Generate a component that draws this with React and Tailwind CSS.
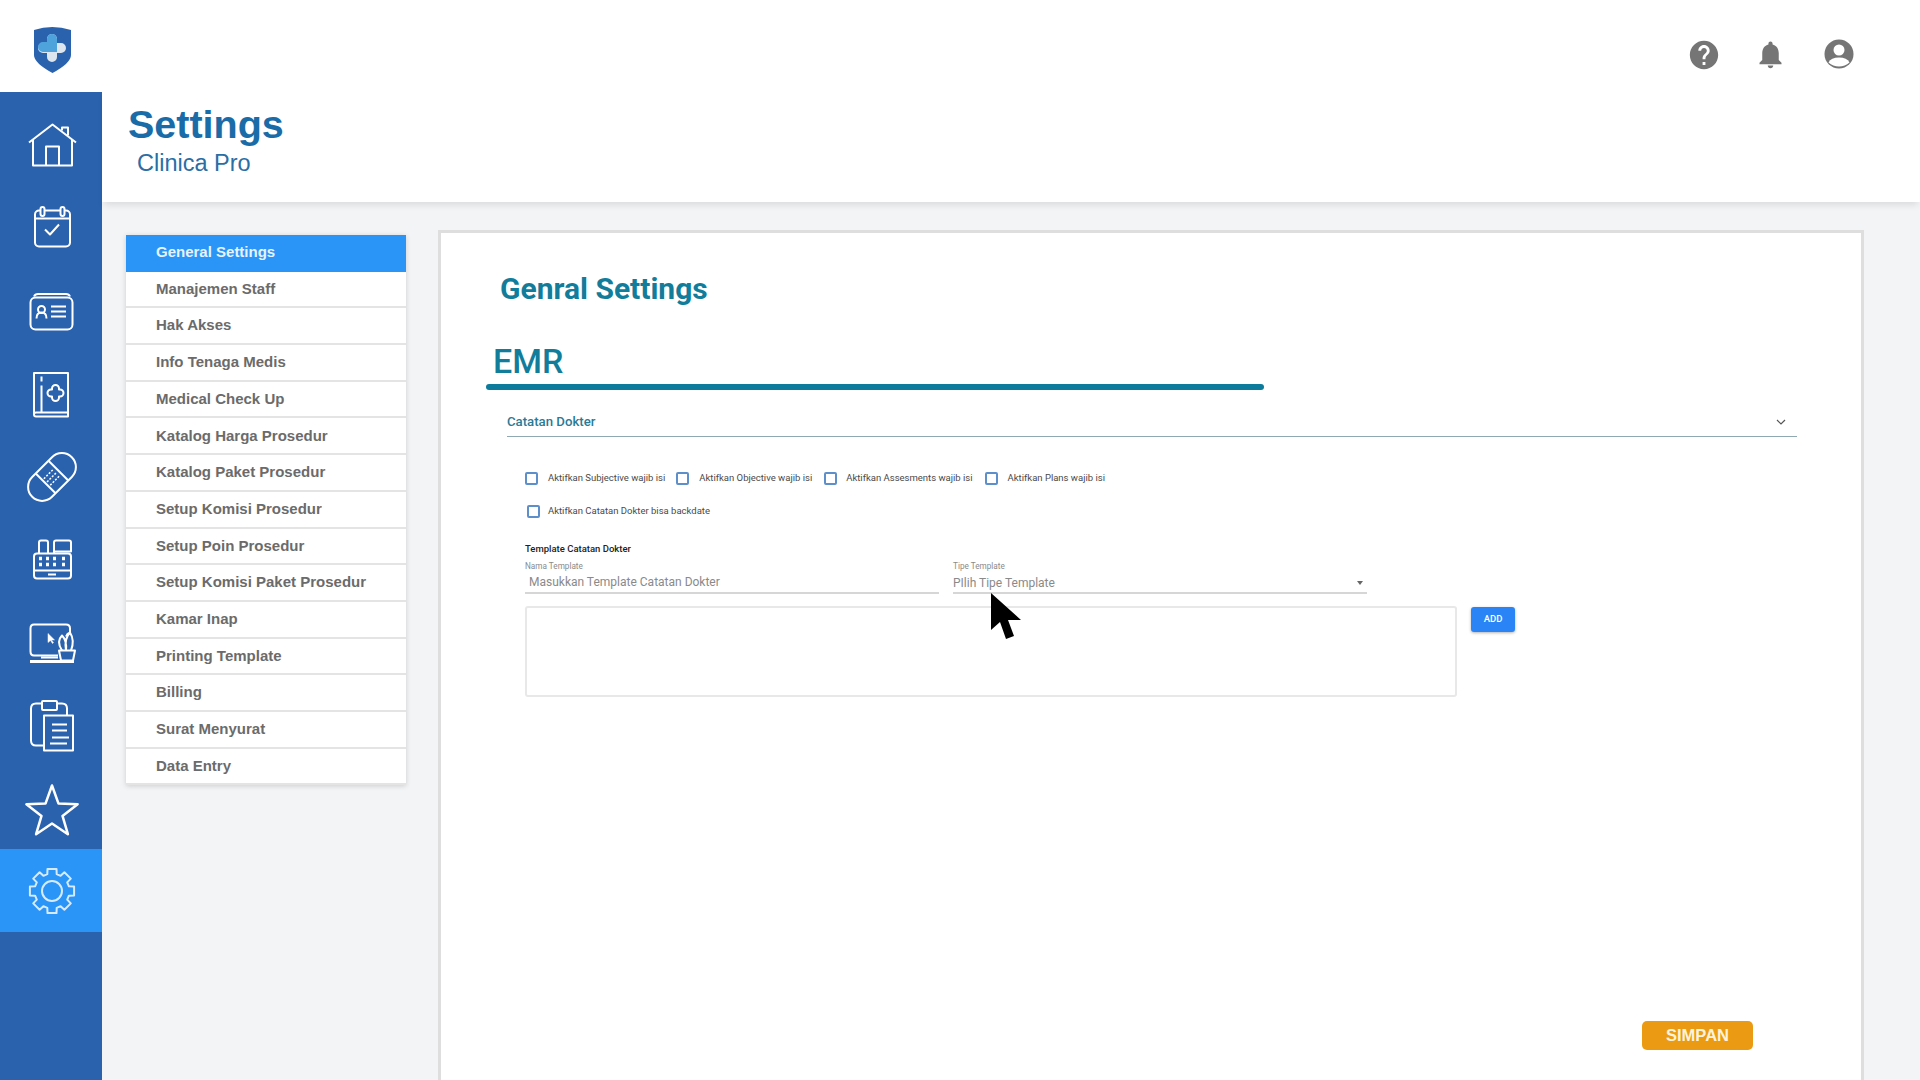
import React from 'react';

const menu = [
  'General Settings', 'Manajemen Staff', 'Hak Akses', 'Info Tenaga Medis', 'Medical Check Up',
  'Katalog Harga Prosedur', 'Katalog Paket Prosedur', 'Setup Komisi Prosedur', 'Setup Poin Prosedur',
  'Setup Komisi Paket Prosedur', 'Kamar Inap', 'Printing Template', 'Billing', 'Surat Menyurat', 'Data Entry',
];

// gear outline, 8 teeth
const gearPath = (cx, cy, outer, inner) => {
  const pts = [];
  for (let i = 0; i < 8; i++) {
    const a = (i * Math.PI) / 4 - Math.PI / 2;
    const w = 0.2;
    const g = 0.27;
    [[inner, a - g], [outer, a - w], [outer, a + w], [inner, a + g]].forEach(([r, t]) => {
      pts.push(`${(cx + r * Math.cos(t)).toFixed(1)} ${(cy + r * Math.sin(t)).toFixed(1)}`);
    });
  }
  return 'M' + pts.join('L') + 'Z';
};

// icons are drawn in page coordinates, the viewBox moves them into their slot
const navIcons = [
  <>
    <path d="M29 142 52.5 124 76 142" />
    <path d="M62 130v-3h6v8" />
    <path d="M33 139v26h39v-26M46 165v-19h13v19" />
  </>,
  <>
    <rect x="35" y="210" width="35" height="36" rx="4" />
    <path d="M35 218h35" />
    <rect x="40.5" y="206.5" width="4" height="9" rx="2" fill="#2a62ae" />
    <rect x="60.5" y="206.5" width="4" height="9" rx="2" fill="#2a62ae" />
    <path d="M45 229l5 5 9-10" />
  </>,
  <>
    <rect x="30.5" y="297" width="42" height="32" rx="5" />
    <path d="M34 296q1-2.500 4-2.500h28q3 0 4 2.500" />
    <circle cx="41.500" cy="309" r="3.500" />
    <path d="M36.500 318q0-6 5-6t5 6" />
    <path d="M51 306h15M51 311h15M51 316h15" />
  </>,
  <>
    <path d="M34 414v-41.500h34V416H36q-2 0-2-2t2-2h32" />
    <path d="M41.500 376v5M41.500 385v27" />
    <path d="M52 389v-1a3.500 3.500 0 0 1 7 0v1h1a3.500 3.500 0 0 1 0 7h-1v1a3.500 3.500 0 0 1-7 0v-1h-1a3.500 3.500 0 0 1 0-7z" />
  </>,
  <g transform="rotate(-45 52 476.5)">
    <rect x="24" y="462.500" width="56" height="28" rx="14" />
    <path d="M43 462.500v28M61 462.500v28" />
    <path d="M45 472h14M45 476.500h14M45 481h14" strokeDasharray="2 1.500" strokeWidth="1.500" />
  </g>,
  <>
    <rect x="34" y="553" width="37" height="25" rx="3" />
    <path d="M39 553v-11q0-2 2-2h5q2 0 2 2v11M54 553v-11q0-2 2-2h13q2 0 2 2v9H54" />
    <path d="M34 570h37M48 574h8" />
    <path d="M39 558h3M46 558h3M53 558h3M62 558h3M39 564h3M46 564h3M53 564h3M62 564h3" strokeWidth="3.500" />
  </>,
  <>
    <path d="M58 655H34q-3.500 0-3.500-4v-23q0-4 3.500-4h32q4 0 4 4v6" />
    <path d="M30 661h44" strokeWidth="3" />
    <path d="M41 657h17" />
    <path d="M48 633v9l2.500-2 2 3 1-.800-2-2.800h3z" fill="#fff" strokeWidth="0.500" />
    <path d="M59 650h16l-2 10H61z" />
    <path d="M62 650q-6-9 0-15 5 5 4 15M66 650q-2-12 4-18 5 8 1 18M70 632q-3 1-4 4" />
  </>,
  <>
    <path d="M44 745H36q-5 0-5-5v-32q0-5 5-5h6M57 703h5q5 0 5 5v7" />
    <rect x="42" y="700.500" width="15" height="9" rx="1" />
    <rect x="44" y="715" width="29" height="35" />
    <path d="M52 724h15M52 730h15M52 737h17M50 743h17" />
  </>,
  <path d="M52 785l6.500 18.100 19.100.700-15.100 11.600 5.400 18.300L52 823l-15.900 10.700 5.400-18.300-15.100-11.600 19.100-.700z" strokeWidth="2.500" />,
  <>
    <path d={gearPath(52, 890.5, 22.5, 17.5)} />
    <circle cx="52" cy="890.500" r="10" />
  </>,
];

const checks = [
  { label: 'Aktifkan Subjective wajib isi', cls: 'gap-[10px]' },
  { label: 'Aktifkan Objective wajib isi', cls: 'gap-[10px] ml-[11px]' },
  { label: 'Aktifkan Assesments wajib isi', cls: 'gap-[9px] ml-[12px]' },
  { label: 'Aktifkan Plans wajib isi', cls: 'gap-[10px] ml-[12px]' },
];

const Check = ({ label, className }) => (
  <div className={`flex items-center ${className}`}>
    <span className="w-[13px] h-[13px] border-2 border-[#5d8fcb] rounded-[2px] shrink-0" />
    <span className="text-[9.500px] leading-5 text-[#4a4a4a] whitespace-nowrap">{label}</span>
  </div>
);

const Sidebar = () => (
  <div className="w-[102px] shrink-0 bg-[#2a62ae] pt-[10px]">
    {navIcons.map((icon, i) => {
      const cy = 143.5 + 83 * i;
      return (
        <div key={i} className={`h-[83px] flex items-center justify-center ${i === 9 ? 'bg-[#2a94f7]' : ''}`}>
          <svg
            viewBox={`20 ${cy - 32} 64 64`}
            className={`w-16 h-16 ml-[2px] ${i === 9 ? 'text-[#d6ebff]' : 'text-white'}`}
            fill="none"
            stroke="currentColor"
            strokeWidth="2"
            strokeLinejoin="round"
          >
            {icon}
          </svg>
        </div>
      );
    })}
  </div>
);

const App = () => {
  return (
    <div className="w-[1920px] h-[1080px] overflow-hidden bg-white flex flex-col font-['Roboto',sans-serif] relative">
      {/* top bar */}
      <div className="h-[92px] shrink-0 flex items-center justify-between pl-[34px] pr-[66px]">
        <svg width="37" height="48" viewBox="0 0 37 48" className="mt-[5px]">
          <path d="M0 5Q18-1 37 5V30Q37 38 18.500 48 0 38 0 30Z" fill="#2a62ae" />
          <path d="M13 14a5 5 0 0 1 10 0v4h4a5 5 0 0 1 0 10h-4v4a5 5 0 0 1-10 0v-4H9a5 5 0 0 1 0-10h4Z" fill="#dde6ee" />
          <path d="M13 14a5 5 0 0 1 10 0v13H9a5 5 0 0 1 0-10h4Z" fill="#4ea3dd" />
        </svg>
        <div className="flex items-center text-[#757575] mt-[18px]">
          <svg width="34" height="34" viewBox="0 0 24 24" fill="currentColor">
            <path d="M12 2C6.480 2 2 6.480 2 12s4.480 10 10 10 10-4.480 10-10S17.520 2 12 2zm1 17h-2v-2h2v2zm2.070-7.750l-.9.920C13.450 12.900 13 13.500 13 15h-2v-.5c0-1.100.450-2.100 1.170-2.830l1.240-1.260c.370-.360.590-.860.590-1.410 0-1.100-.9-2-2-2s-2 .9-2 2H8c0-2.210 1.790-4 4-4s4 1.790 4 4c0 .880-.360 1.680-.93 2.250z" />
          </svg>
          <svg width="33" height="33" viewBox="0 0 24 24" fill="currentColor" className="ml-[33px] mb-[2px]">
            <path d="M12 22c1.100 0 2-.9 2-2h-4c0 1.100.9 2 2 2zm6-6v-5c0-3.070-1.630-5.640-4.500-6.320V4c0-.830-.670-1.500-1.500-1.500s-1.500.670-1.500 1.500v.680C7.640 5.360 6 7.920 6 11v5l-2 2v1h16v-1l-2-2z" />
          </svg>
          <svg width="30" height="30" viewBox="0 0 30 30" className="ml-[37px] mb-[2px]">
            <circle cx="15" cy="15" r="14.500" fill="#757575" />
            <circle cx="15" cy="11" r="5.500" fill="#fff" />
            <path d="M4.500 23.500Q7 18.500 15 18.500T25.500 23.500Q21 27.500 15 27.500T4.500 23.500Z" fill="#fff" />
          </svg>
        </div>
      </div>

      <div className="flex flex-1 min-h-0">
        <Sidebar />
        <div className="flex-1 min-w-0 flex flex-col bg-[#f3f4f5]">
          {/* title */}
          <div className="h-[110px] shrink-0 bg-white shadow-[0_5px_7px_-2px_rgba(0,0,0,0.1)] pl-[26px] pt-[8px] font-['Liberation_Sans',sans-serif] relative">
            <h1 className="text-[39.500px] leading-[48px] font-bold text-[#1a6ca8]">Settings</h1>
            <p className="text-[23.500px] leading-[28px] text-[#2a6ea6] ml-[9px] mt-[1px]">Clinica Pro</p>
          </div>

          <div className="flex flex-1 min-h-0 pl-[24px] pt-[28px]">
            {/* settings menu */}
            <div className="w-[280px] shrink-0 mt-[5px] self-start font-['Liberation_Sans',sans-serif] shadow-[0_1px_5px_rgba(0,0,0,0.16)]">
              {menu.map((m, i) => (
                <div
                  key={m}
                  className={`h-[36.700px] flex items-center pl-[30px] text-[15px] font-bold border-b-2 ${
                    i === 0 ? 'bg-[#2a94f7] text-[#e6f3ff] border-[#2a94f7]' : 'bg-white text-[#6b6b6b] border-[#e4e4e4]'
                  }`}
                >
                  {m}
                </div>
              ))}
            </div>

            {/* panel */}
            <div className="w-[1426px] ml-[32px] bg-white border-x-[3px] border-t-[3px] border-[#dedede] flex flex-col">
              <h2 className="ml-[59px] mt-[39px] text-[30px] leading-[34px] font-bold text-[#127d9b]">Genral Settings</h2>
              <h3 className="ml-[52px] mt-[35px] text-[34px] leading-[40px] font-medium text-[#127d9b]">EMR</h3>
              <div className="ml-[45px] mt-[3px] w-[778px] h-[6px] rounded-full bg-[#0d7c9c]" />

              <div className="ml-[66px] w-[1290px] mt-[16px] h-[31px] pt-[2px] flex items-center justify-between border-b border-[#8fa9b3]">
                <span className="text-[13.200px] font-medium text-[#2b7a96]">Catatan Dokter</span>
                <svg width="12" height="12" viewBox="0 0 12 12" fill="none" stroke="#555" strokeWidth="1.200" className="mr-[10px]">
                  <path d="M2 4l4 4 4-4" />
                </svg>
              </div>

              <div className="ml-[84px] mt-[31px] flex">
                {checks.map((c) => (
                  <Check key={c.label} label={c.label} className={c.cls} />
                ))}
              </div>
              <Check label="Aktifkan Catatan Dokter bisa backdate" className="gap-[8px] ml-[86px] mt-[13px]" />

              <div className="ml-[84px] mt-[21px] text-[9.500px] leading-[14px] font-medium text-[#222]">Template Catatan Dokter</div>

              <div className="ml-[84px] mt-[5px] flex gap-[14px]">
                <div className="w-[414px] border-b-2 border-[#d6d6d6] pb-[2px]">
                  <div className="text-[8.200px] leading-[10px] text-[#8a8a8a]">Nama Template</div>
                  <div className="mt-[3px] ml-[4px] text-[12px] leading-4 text-[#8a8a8a]">Masukkan Template Catatan Dokter</div>
                </div>
                <div className="w-[414px] border-b-2 border-[#d6d6d6] pb-[1px]">
                  <div className="text-[8.200px] leading-[10px] text-[#8a8a8a]">Tipe Template</div>
                  <div className="mt-[4px] flex items-center justify-between text-[12px] leading-4 text-[#8a8a8a]">
                    <span>PIlih Tipe Template</span>
                    <span className="mr-[4px] border-x-[3.500px] border-x-transparent border-t-[4px] border-t-[#666]" />
                  </div>
                </div>
              </div>

              <div className="ml-[84px] mt-[12px] flex items-start gap-[14px]">
                <div className="w-[932px] h-[91px] border-2 border-[#e8e8e8] rounded-[3px]" />
                <button className="w-[44px] h-[25px] mt-[1px] bg-[#2a84f5] text-white text-[9.500px] font-medium rounded-[3px] shadow-[0_1px_3px_rgba(0,0,0,0.3)]">ADD</button>
              </div>

              <div className="mt-auto mb-[30px] ml-[1201px]">
                <button className="w-[111px] h-[29px] rounded-[5px] bg-[#eb9b13] text-[#fdf3dc] text-[16.500px] font-bold font-['Liberation_Sans',sans-serif]">SIMPAN</button>
              </div>
            </div>
          </div>
        </div>
      </div>

      {/* mouse pointer from the recording */}
      <svg width="34" height="48" viewBox="0 0 34 48" className="absolute left-[990px] top-[592px]">
        <path d="M1 1V38L10 30 16 47 24 44 18 28H31Z" fill="#000" />
      </svg>
    </div>
  );
};

export default App;
